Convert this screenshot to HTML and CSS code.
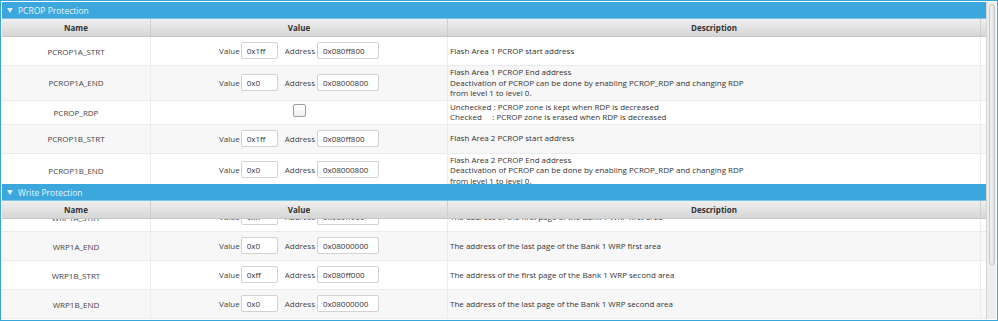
FILE: index.html
```html
<!DOCTYPE html>
<html>
<head>
<meta charset="utf-8">
<link rel="stylesheet" href="styles.css">
</head>
<body>
<div class="frame">
  <div class="main">
    <section class="pane pane-pcrop">
      <div class="pane-title"><svg class="caret" width="6" height="5" viewBox="0 0 6 5"><polygon points="0,0 6,0 3,5" fill="#d9ecf7"/></svg>PCROP Protection</div>
      <div class="thead grid"><div class="th">Name</div><div class="th">Value</div><div class="th">Description</div><div class="th filler"></div></div>
      <div class="tbody">
        <div class="tr grid">
          <div class="td name">PCROP1A_STRT</div>
          <div class="td value"><span class="lbl">Value</span><input class="field short" value="0x1ff"><span class="lbl addr">Address</span><input class="field long" value="0x080ff800"></div>
          <div class="td desc"><div>Flash Area 1 PCROP start address</div></div>
          <div class="td filler"></div>
        </div>
        <div class="tr grid">
          <div class="td name">PCROP1A_END</div>
          <div class="td value"><span class="lbl">Value</span><input class="field short" value="0x0"><span class="lbl addr">Address</span><input class="field long" value="0x08000800"></div>
          <div class="td desc"><div>Flash Area 1 PCROP End address<br>Deactivation of PCROP can be done by enabling PCROP_RDP and changing RDP<br>from level 1 to level 0.</div></div>
          <div class="td filler"></div>
        </div>
        <div class="tr grid">
          <div class="td name">PCROP_RDP</div>
          <div class="td value check"><span class="checkbox"></span></div>
          <div class="td desc"><div><span class="pre">Unchecked : PCROP zone is kept when RDP is decreased</span><br><span class="pre">Checked     : PCROP zone is erased when RDP is decreased</span></div></div>
          <div class="td filler"></div>
        </div>
        <div class="tr grid">
          <div class="td name">PCROP1B_STRT</div>
          <div class="td value"><span class="lbl">Value</span><input class="field short" value="0x1ff"><span class="lbl addr">Address</span><input class="field long" value="0x080ff800"></div>
          <div class="td desc"><div>Flash Area 2 PCROP start address</div></div>
          <div class="td filler"></div>
        </div>
        <div class="tr grid">
          <div class="td name">PCROP1B_END</div>
          <div class="td value"><span class="lbl">Value</span><input class="field short" value="0x0"><span class="lbl addr">Address</span><input class="field long" value="0x08000800"></div>
          <div class="td desc"><div>Flash Area 2 PCROP End address<br>Deactivation of PCROP can be done by enabling PCROP_RDP and changing RDP<br>from level 1 to level 0.</div></div>
          <div class="td filler"></div>
        </div>
      </div>
    </section>
    <section class="pane pane-wrp">
      <div class="pane-title"><svg class="caret" width="6" height="5" viewBox="0 0 6 5"><polygon points="0,0 6,0 3,5" fill="#d9ecf7"/></svg>Write Protection</div>
      <div class="thead grid"><div class="th">Name</div><div class="th">Value</div><div class="th">Description</div><div class="th filler"></div></div>
      <div class="tbody">
        <div class="tbody-inner scrolled">
          <div class="tr grid">
            <div class="td name">WRP1A_STRT</div>
            <div class="td value"><span class="lbl">Value</span><input class="field short" value="0xff"><span class="lbl addr">Address</span><input class="field long" value="0x080ff000"></div>
            <div class="td desc"><div>The address of the first page of the Bank 1 WRP first area</div></div>
            <div class="td filler"></div>
          </div>
          <div class="tr grid">
            <div class="td name">WRP1A_END</div>
            <div class="td value"><span class="lbl">Value</span><input class="field short" value="0x0"><span class="lbl addr">Address</span><input class="field long" value="0x08000000"></div>
            <div class="td desc"><div>The address of the last page of the Bank 1 WRP first area</div></div>
            <div class="td filler"></div>
          </div>
          <div class="tr grid">
            <div class="td name">WRP1B_STRT</div>
            <div class="td value"><span class="lbl">Value</span><input class="field short" value="0xff"><span class="lbl addr">Address</span><input class="field long" value="0x080ff000"></div>
            <div class="td desc"><div>The address of the first page of the Bank 1 WRP second area</div></div>
            <div class="td filler"></div>
          </div>
          <div class="tr grid">
            <div class="td name">WRP1B_END</div>
            <div class="td value"><span class="lbl">Value</span><input class="field short" value="0x0"><span class="lbl addr">Address</span><input class="field long" value="0x08000000"></div>
            <div class="td desc"><div>The address of the last page of the Bank 1 WRP second area</div></div>
            <div class="td filler"></div>
          </div>
        </div>
      </div>
    </section>
  </div>
  <div class="scrollbar"><div class="thumb"></div></div>
</div>
</body>
</html>
```
FILE: styles.css
```css
html, body {
  margin: 0;
  padding: 0;
}
body {
  width: 998px;
  height: 321px;
  overflow: hidden;
  background: #fff;
  font-family: "Open Sans", "Noto Sans", sans-serif;
  font-size: 8px;
  color: #333;
}
.frame {
  box-sizing: border-box;
  height: 321px;
  border: 1px solid #3aa7db;
  padding: 1px;
  display: flex;
}
.main {
  flex: 1;
  min-width: 0;
  display: flex;
  flex-direction: column;
}
.scrollbar {
  width: 10px;
  box-sizing: border-box;
  background: #ededed;
  border-left: 1px solid #d6d6d6;
  padding: 2px 1px 0 2px;
}
.thumb {
  height: 261px;
  box-sizing: border-box;
  border: 1px solid #c6c6c6;
  border-radius: 3px;
  background: linear-gradient(to right, #f4f4f4, #dedede);
}
.pane {
  display: flex;
  flex-direction: column;
}
.pane-wrp {
  flex: 1;
  min-height: 0;
}
.pane-title {
  height: 17px;
  box-sizing: border-box;
  background: #3ba7dc;
  border-bottom: 1px solid #7cc4e8;
  color: #eaf5fb;
  display: flex;
  align-items: center;
  gap: 5px;
  padding-left: 5px;
  font-size: 8.5px;
}
.caret {
  display: block;
}
.grid {
  display: grid;
  grid-template-columns: 149px 297px 533px 1fr;
}
.thead {
  position: relative;
  z-index: 1;
  height: 18px;
  box-sizing: border-box;
  background: linear-gradient(#efefef, #d6d6d6);
  border-bottom: 1px solid #c8c8c8;
  font-weight: bold;
  color: #333;
}
.th {
  display: flex;
  align-items: center;
  justify-content: center;
  border-right: 1px solid #cfcfcf;
}
.th.filler {
  border-right: none;
}
.tbody {
  overflow: hidden;
}
.pane-pcrop .tbody {
  height: 147px;
}
.pane-wrp .tbody {
  flex: 1;
  min-height: 0;
}
.tbody-inner.scrolled {
  margin-top: -16px;
}
.tr {
  border-bottom: 1px solid #ebebeb;
  background: #fff;
}
.tr:nth-child(even) {
  background: #f7f7f7;
}
.td {
  display: flex;
  align-items: center;
  border-right: 1px solid #ececec;
  min-width: 0;
}
.td.filler {
  border-right: none;
}
.td.name {
  justify-content: center;
  color: #444;
}
.td.value {
  justify-content: center;
  padding: 5px 0 6px;
  color: #444;
}
.td.value.check {
  align-items: flex-start;
  padding: 3px 0 0;
}
.td.desc {
  padding: 1px 2px 1px 2px;
  line-height: 10.5px;
  white-space: nowrap;
  color: #333;
}
.pre {
  white-space: pre;
}
.lbl.addr {
  margin-left: 7px;
}
.field {
  height: 17px;
  box-sizing: border-box;
  border: 1px solid #d2d2d2;
  border-radius: 2px;
  padding: 0 5px;
  margin: 0 0 0 1px;
  font-family: "Open Sans", "Noto Sans", sans-serif;
  font-size: 8px;
  color: #333;
  background: #fff;
  outline: none;
}
.field.short {
  width: 37px;
}
.field.long {
  width: 62px;
  margin-left: 2px;
}
.checkbox {
  display: block;
  width: 13px;
  height: 13px;
  box-sizing: border-box;
  border: 1px solid #9c9c9c;
  border-radius: 2px;
  background: linear-gradient(#ffffff, #f0f0f0);
}
```
